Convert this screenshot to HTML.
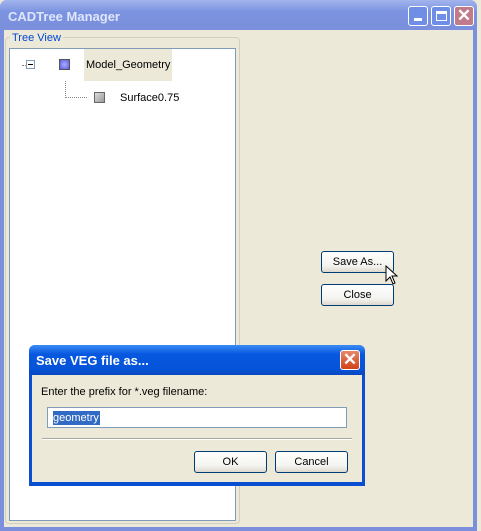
<!DOCTYPE html>
<html><head><style>
body{margin:0;width:481px;height:531px;background:#ece9d8;position:relative;overflow:hidden;font-family:"Liberation Sans",Tahoma,sans-serif;font-size:11px;}
div{box-sizing:border-box;position:absolute;}
.btn{background:linear-gradient(#fff,#f3f3ef 70%,#dcd8cc);border:1px solid #003c74;border-radius:3px;text-align:center;line-height:21px;font-size:11px;color:#000;}
.xb{width:20px;height:20px;border:1px solid #fff;border-radius:3px;}
</style></head><body>
<div style="left:0;top:0;width:477px;height:531px;background:#7b8fdc;border-radius:7px 7px 0 0;"></div>
<div style="left:0;top:0;width:477px;height:30px;background:linear-gradient(#a3b4ee,#7a93e0 40%,#7b8fdc);border-radius:7px 7px 0 0;"></div>
<div style="left:8px;top:9px;color:#dfe6fb;font-weight:bold;font-size:13px;">CADTree Manager</div>
<div class="xb" style="left:408px;top:6px;background:#6f8fe6;"><div style="left:5px;top:11px;width:8px;height:3px;background:#fff"></div></div>
<div class="xb" style="left:431px;top:6px;background:#6f8fe6;"><div style="left:4px;top:4px;width:11px;height:10px;border:1px solid #fff;border-top-width:3px"></div></div>
<div class="xb" style="left:454px;top:6px;background:#c07a8a;color:#fff;font-size:17px;line-height:17px;text-align:center;font-weight:bold">✕</div>
<div style="left:4px;top:30px;width:469px;height:497px;background:#ece9d8;"></div>
<div style="left:477px;top:0;width:4px;height:531px;background:#ece9d8;"></div>
<div style="left:5px;top:37px;width:235px;height:487px;border:1px solid #d0d0bf;border-radius:4px;"></div>
<div style="left:10px;top:32px;background:#ece9d8;color:#0046d5;padding:0 2px;">Tree View</div>
<div style="left:9px;top:48px;width:227px;height:473px;background:#fff;border:1px solid #7f9db9;"></div>
<div style="left:84px;top:49px;width:88px;height:32px;background:#ece9d8;"></div>
<div style="left:86px;top:59px;font-size:11px;">Model_Geometry</div>
<div style="left:22px;top:65px;width:4px;border-top:1px dotted #888;"></div>
<div style="left:26px;top:60px;width:9px;height:9px;border:1px solid #7f9db9;background:#fff"><div style="left:1px;top:3px;width:5px;height:1px;background:#000"></div></div>
<div style="left:59px;top:59px;width:11px;height:11px;background:radial-gradient(#aab0ff,#5a5ae0);border:1px solid #555;"></div>
<div style="left:65px;top:81px;width:1px;height:17px;border-left:1px dotted #888;"></div>
<div style="left:65px;top:97px;width:22px;border-top:1px dotted #888;"></div>
<div style="left:94px;top:92px;width:11px;height:11px;background:linear-gradient(135deg,#ddd,#999);border:1px solid #666;"></div>
<div style="left:120px;top:92px;">Surface0.75</div>
<div class="btn" style="left:321px;top:251px;width:73px;height:22px;">Save As...</div>
<div class="btn" style="left:321px;top:284px;width:73px;height:22px;">Close</div>
<svg style="position:absolute;left:385px;top:265px" width="14" height="22"><path d="M1 1 L1 16 L5 12 L8 19 L10 18 L7 11 L12 11 Z" fill="#fff" stroke="#000"/></svg>
<div style="left:29px;top:345px;width:336px;height:141px;background:#0a4fd0;border-radius:6px 6px 0 0;"></div>
<div style="left:29px;top:345px;width:336px;height:30px;background:linear-gradient(#3c8cf4,#0758e0 30%,#0553d8 80%,#0a48c0);border-radius:6px 6px 0 0;"></div>
<div style="left:36px;top:353px;color:#fff;font-weight:bold;font-size:13px;">Save VEG file as...</div>
<div class="xb" style="left:340px;top:350px;background:linear-gradient(#e8876a,#d0421a);color:#fff;font-size:17px;line-height:17px;text-align:center;font-weight:bold">✕</div>
<div style="left:32px;top:375px;width:330px;height:107px;background:#ece9d8;"></div>
<div style="left:41px;top:386px;">Enter the prefix for *.veg filename:</div>
<div style="left:47px;top:407px;width:300px;height:21px;background:#fff;border:1px solid #7f9db9;"><div style="left:5px;top:3px;background:#316ac5;color:#fff;line-height:14px;padding:0 1px 0 0">geometry</div></div>
<div style="left:42px;top:438px;width:310px;height:2px;border-top:1px solid #aca899;border-bottom:1px solid #fff;"></div>
<div class="btn" style="left:194px;top:451px;width:73px;height:22px;">OK</div>
<div class="btn" style="left:275px;top:451px;width:73px;height:22px;">Cancel</div>
</body></html>
